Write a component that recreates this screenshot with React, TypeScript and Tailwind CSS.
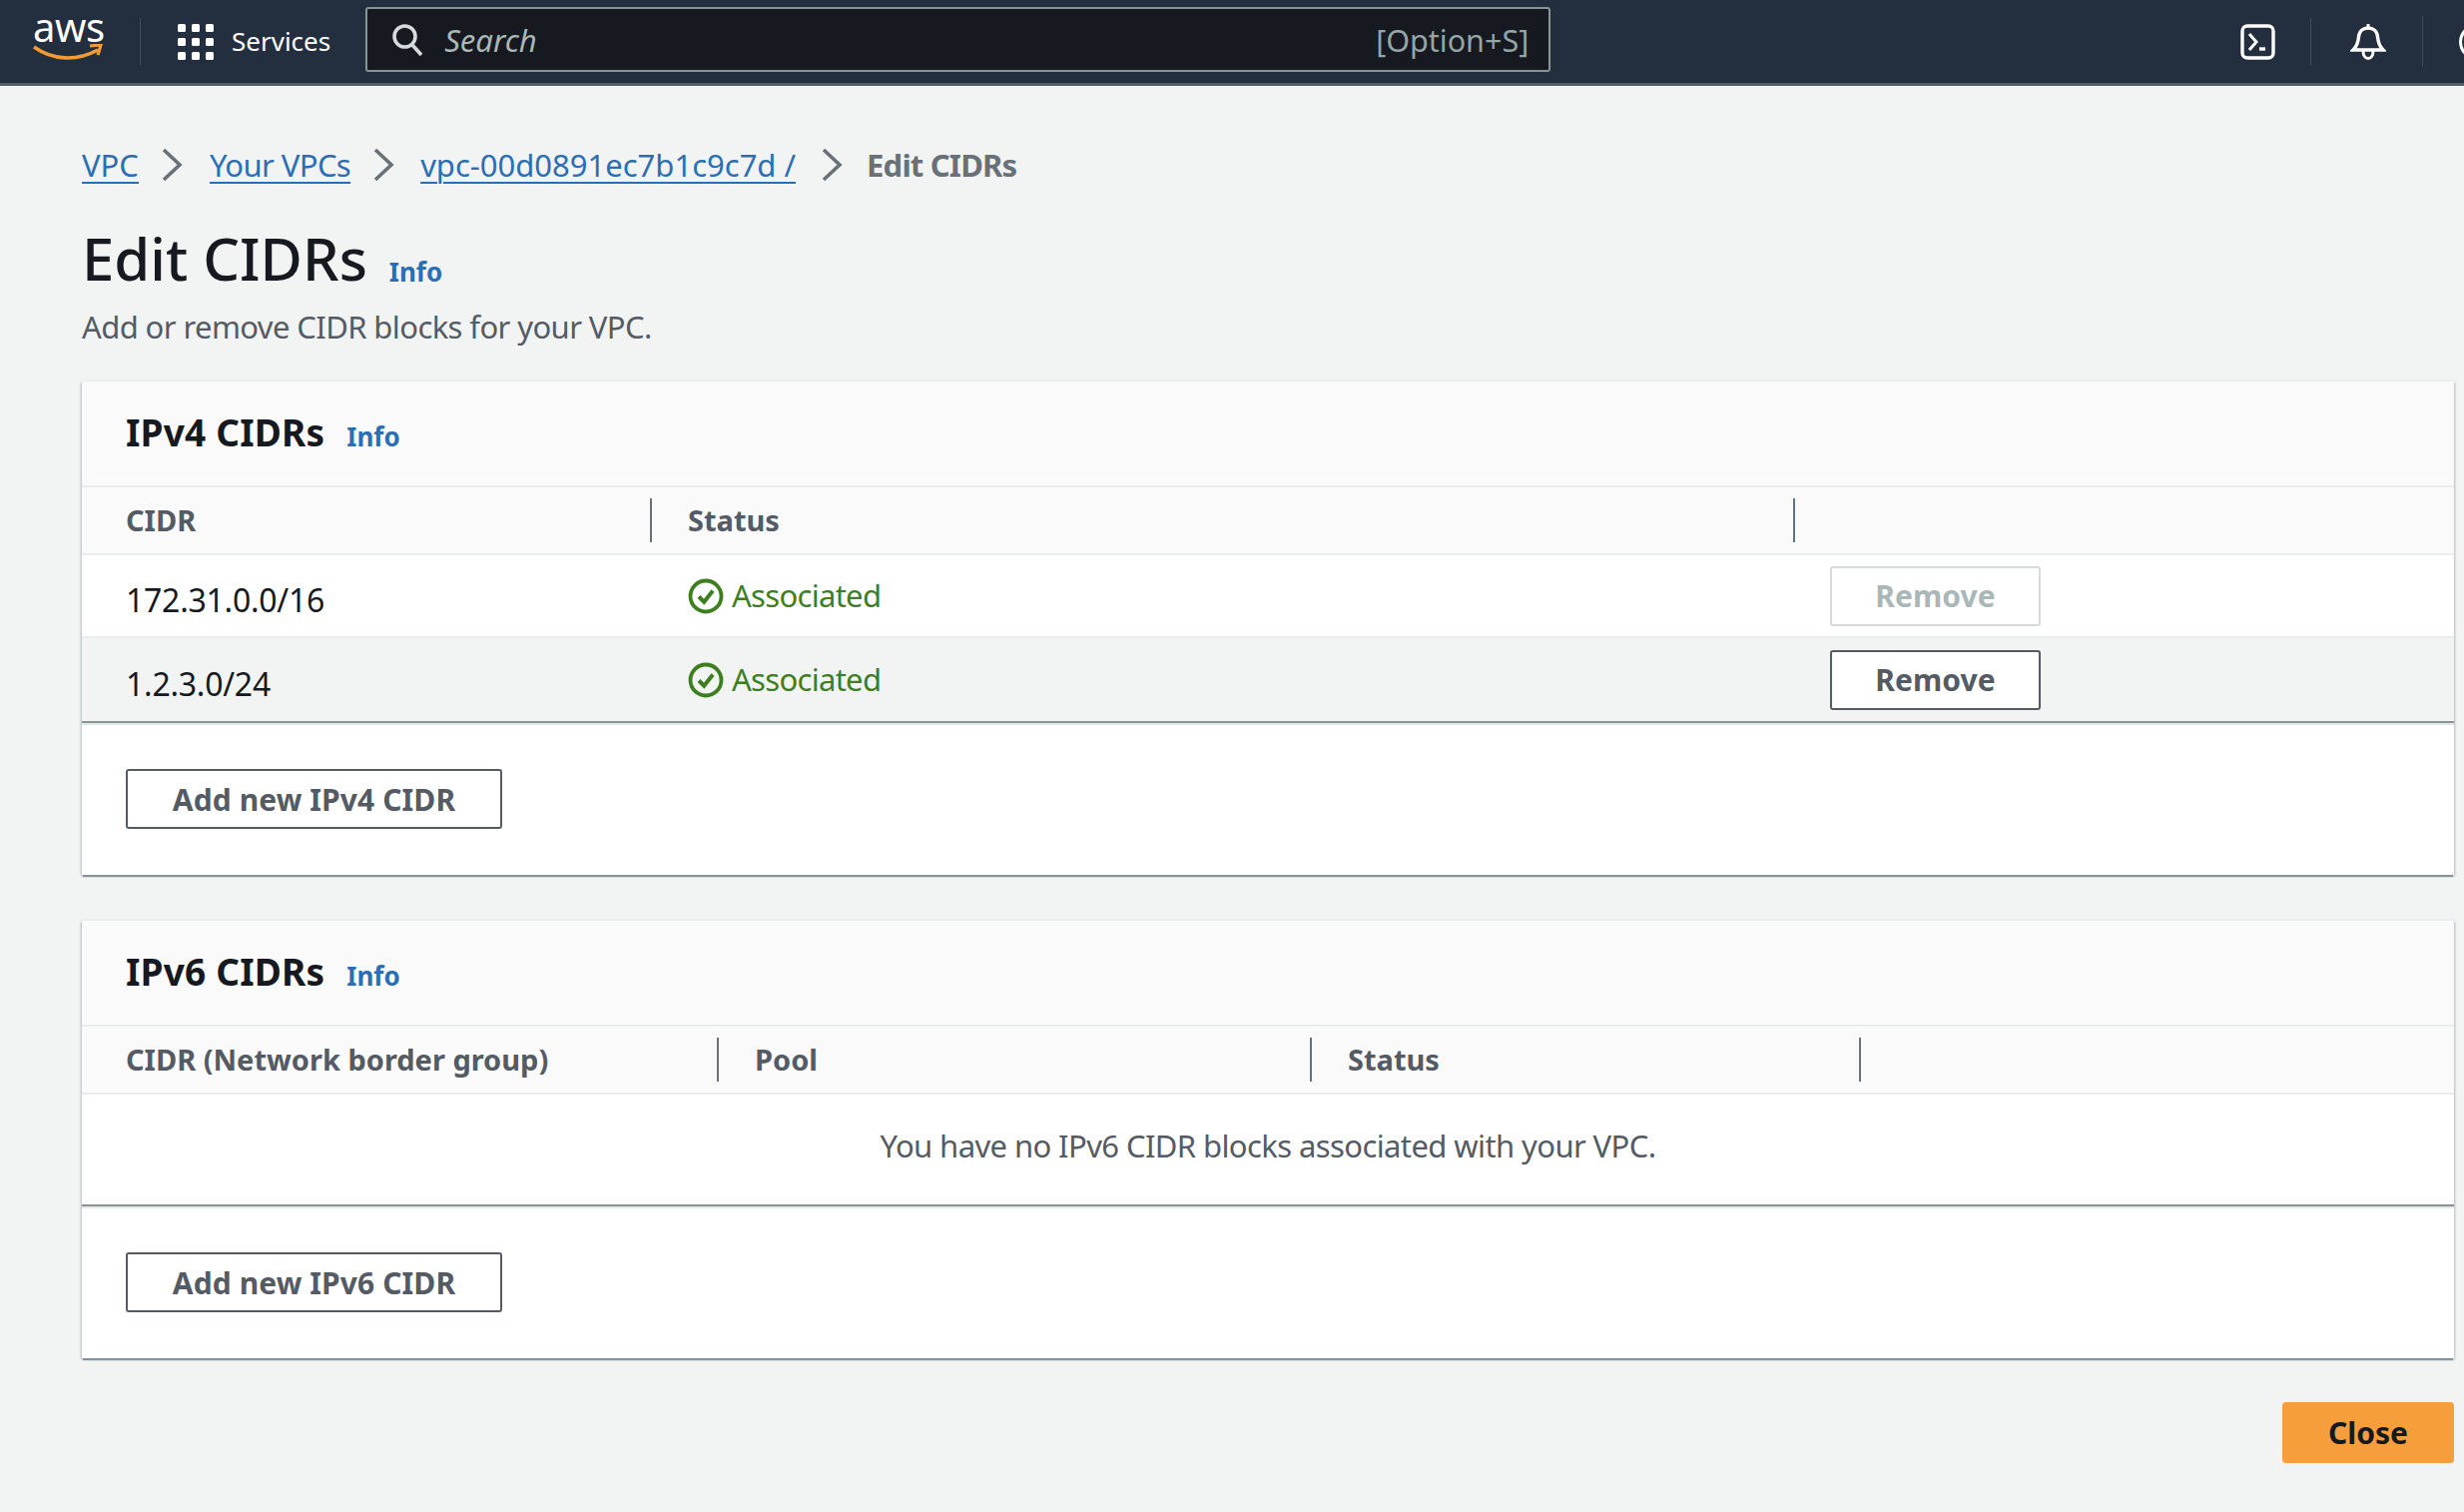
import React from "react";

const Check = () => (
  <svg width="36" height="36" viewBox="0 0 36 36" fill="none" className="shrink-0">
    <circle cx="18" cy="18" r="15.5" stroke="#3d7e1f" strokeWidth="3.8" />
    <path d="M11 18.5l5.2 5.2L25 12.5" stroke="#3d7e1f" strokeWidth="4" />
  </svg>
);

const Chevron = () => (
  <svg width="26" height="34" viewBox="0 0 26 34" fill="none" className="shrink-0">
    <path d="M4 2l16 15L4 32" stroke="#687078" strokeWidth="3.6" />
  </svg>
);

const Info = ({ className = "" }: { className?: string }) => (
  <span className={`text-[26px] leading-none font-bold text-[#2a6fb5] ${className}`}>Info</span>
);

const Btn = ({ children, className = "" }: { children: React.ReactNode; className?: string }) => (
  <div className={`flex items-center justify-center h-[60px] rounded-[3px] border-2 bg-white text-[30px] font-bold tracking-[0.1px] ${className}`}>
    {children}
  </div>
);

const Divider = () => <span className="w-[2px] h-[44px] bg-[#687078] shrink-0" />;

const ColHead = ({ w, label }: { w: string; label: string }) => (
  <div className={`flex items-center ${w}`}>
    <span className="flex-1 text-[29px] font-bold text-[#545b64] whitespace-nowrap">{label}</span>
    <Divider />
  </div>
);

const PanelHead = ({ title }: { title: string }) => (
  <div className="h-[106px] pb-[4px] flex items-center pl-[44px] bg-[#fafafa] border-b-2 border-[#eaeded]">
    <span className="text-[37px] font-bold text-[#16191f] leading-none tracking-[0.2px]">{title}</span>
    <Info className="ml-[22px] mt-[9px]" />
  </div>
);

const Row = ({ cidr, disabled }: { cidr: string; disabled?: boolean }) => (
  <div className={`flex items-center pl-[44px] h-[83px] ${disabled ? "bg-white border-b-2 border-[#eaeded]" : "bg-[#f2f3f3]"}`}>
    <span className="w-[563px] text-[32px] tracking-[-0.25px] text-[#16191f] mt-[8px]">{cidr}</span>
    <div className="w-[1144px] flex items-center gap-[8px]">
      <Check />
      <span className="text-[31px] tracking-[-0.7px] text-[#3d7e1f] leading-none">Associated</span>
    </div>
    <Btn className={`w-[211px] ${disabled ? "border-[#d5dbdb] text-[#aab7b8]" : "border-[#545b64] text-[#545b64]"}`}>Remove</Btn>
  </div>
);

const Panel = ({ children, className = "" }: { children: React.ReactNode; className?: string }) => (
  <section className={`bg-white border-t-2 border-[#eaeded] shadow-[0_3px_1px_-1px_#87939a,2px_2px_2px_-1px_#b4bcc0,-2px_2px_2px_-1px_#b4bcc0] ${className}`}>
    {children}
  </section>
);

const Footer = ({ label }: { label: string }) => (
  <div className="h-[154px] pt-[46px] pl-[44px] border-t-2 border-[#879596] shadow-[inset_0_2px_1px_#e4e7e8]">
    <Btn className="w-[377px] border-[#545b64] text-[#545b64]">{label}</Btn>
  </div>
);

export default function App() {
  return (
    <div className="h-[1514px] w-[2468px] overflow-hidden bg-[#f2f3f3] text-[#16191f] font-['Noto_Sans',sans-serif]">
      <header className="h-[86px] bg-[#232f3e] border-b-[3px] border-[#545b64] flex items-center overflow-hidden">
        <div className="relative w-[140px] h-[83px] shrink-0">
          <span className="absolute left-[33px] top-[7px] text-[40px] leading-[40px] tracking-[-0.5px] text-white">aws</span>
          <svg className="absolute left-[33px] top-[44px]" width="70" height="18" viewBox="0 0 70 18" fill="none">
            <path d="M1 3c18 13 42 15 64 3" stroke="#f39c32" strokeWidth="3.6" />
            <path d="M57 2l11-1-3 10" stroke="#f39c32" strokeWidth="3.2" />
          </svg>
        </div>
        <span className="w-[1px] h-[47px] bg-[#414d5c] shrink-0" />
        <svg className="ml-[37px] shrink-0" width="36" height="36" viewBox="0 0 36 36" fill="white">
          {[0, 14, 28].map((y) =>
            [0, 14, 28].map((x) => <rect key={`${x}-${y}`} x={x} y={y} width="8" height="8" rx="1.5" />)
          )}
        </svg>
        <span className="ml-[18px] -mt-[2px] text-[26px] text-white leading-none whitespace-nowrap">Services</span>
        <div className="ml-[35px] mb-[4px] w-[1187px] h-[65px] shrink-0 bg-[#16191f] border-2 border-[#879596] rounded-[3px] flex items-center pl-[24px] pr-[20px]">
          <svg width="32" height="34" viewBox="0 0 32 34" fill="none">
            <circle cx="13.5" cy="13.5" r="10.5" stroke="#d5dbdb" strokeWidth="3.6" />
            <path d="M21 22l9 10" stroke="#d5dbdb" strokeWidth="3.6" />
          </svg>
          <span className="ml-[21px] mt-[2px] flex-1 text-[31px] italic text-[#aab7b8] leading-none">Search</span>
          <span className="mt-[2px] text-[30.500px] text-[#95a5a6] leading-none">[Option+S]</span>
        </div>
        <svg className="ml-[691px] shrink-0" width="35" height="36" viewBox="0 0 35 36" fill="none">
          <rect x="2" y="2" width="31" height="32" rx="5" stroke="white" strokeWidth="3.4" />
          <path d="M9 10l7 8-7 8" stroke="white" strokeWidth="3" />
          <path d="M19 25h6" stroke="white" strokeWidth="3.4" />
        </svg>
        <span className="ml-[35px] w-[1px] h-[47px] bg-[#414d5c] shrink-0" />
        <svg className="ml-[39px] shrink-0" width="36" height="37" viewBox="0 0 36 37" fill="none">
          <path d="M18 1v4" stroke="white" strokeWidth="3" />
          <path d="M3 27c4-4 5-7 5.500-13C9 8 13 5 18 5s9 3 9.500 9c.5 6 1.500 9 5.500 13z" stroke="white" strokeWidth="3.4" />
          <path d="M13 28c0 10 10 10 10 0" stroke="white" strokeWidth="3" />
        </svg>
        <span className="ml-[36px] w-[1px] h-[51px] bg-[#414d5c] shrink-0" />
        <span className="ml-[36px] w-[36px] h-[36px] rounded-full border-[3px] border-white shrink-0" />
      </header>

      <main className="pl-[82px] pr-[10px] pt-[60px]">
        <nav className="h-[38px] flex items-center text-[31px] leading-none">
          <span className="text-[#2a6fb5] underline underline-offset-[5px] decoration-2">VPC</span>
          <span className="ml-[21px] mr-[24px] flex"><Chevron /></span>
          <span className="text-[#2a6fb5] underline underline-offset-[5px] decoration-2 tracking-[-0.6px]">Your VPCs</span>
          <span className="ml-[21px] mr-[23px] flex"><Chevron /></span>
          <span className="text-[#2a6fb5] underline underline-offset-[5px] decoration-2">vpc-00d0891ec7b1c9c7d /</span>
          <span className="ml-[24px] mr-[21px] flex"><Chevron /></span>
          <span className="font-bold text-[#687078] tracking-[-0.8px]">Edit CIDRs</span>
        </nav>

        <div className="mt-[38px] h-[74px] flex items-center">
          <h1 className="text-[58px] font-medium leading-none text-[#16191f]">Edit CIDRs</h1>
          <Info className="ml-[22px] mt-[26px]" />
        </div>
        <p className="mt-[10px] h-[42px] text-[31px] tracking-[-0.6px] leading-[42px] text-[#545b64]">Add or remove CIDR blocks for your VPC.</p>

        <Panel className="mt-[32px]">
          <PanelHead title="IPv4 CIDRs" />
          <div className="h-[68px] flex items-center pl-[44px] bg-[#fafafa] border-b-2 border-[#eaeded]">
            <ColHead w="w-[527px]" label="CIDR" />
            <div className="w-[36px]" />
            <ColHead w="w-[1109px]" label="Status" />
          </div>
          <Row cidr="172.31.0.0/16" disabled />
          <Row cidr="1.2.3.0/24" />
          <Footer label="Add new IPv4 CIDR" />
        </Panel>

        <Panel className="mt-[44px]">
          <PanelHead title="IPv6 CIDRs" />
          <div className="h-[68px] flex items-center pl-[44px] bg-[#fafafa] border-b-2 border-[#eaeded]">
            <ColHead w="w-[594px]" label="CIDR (Network border group)" />
            <div className="w-[36px]" />
            <ColHead w="w-[558px]" label="Pool" />
            <div className="w-[36px]" />
            <ColHead w="w-[514px]" label="Status" />
          </div>
          <div className="h-[110px] pb-[8px] flex items-center justify-center text-[31px] tracking-[-0.6px] text-[#545b64]">
            You have no IPv6 CIDR blocks associated with your VPC.
          </div>
          <Footer label="Add new IPv6 CIDR" />
        </Panel>

        <div className="mt-[44px] flex justify-end">
          <div className="w-[172px] h-[61px] rounded-[4px] bg-[#f59e3b] flex items-center justify-center text-[30px] font-bold text-[#16191f]">Close</div>
        </div>
      </main>
    </div>
  );
}
